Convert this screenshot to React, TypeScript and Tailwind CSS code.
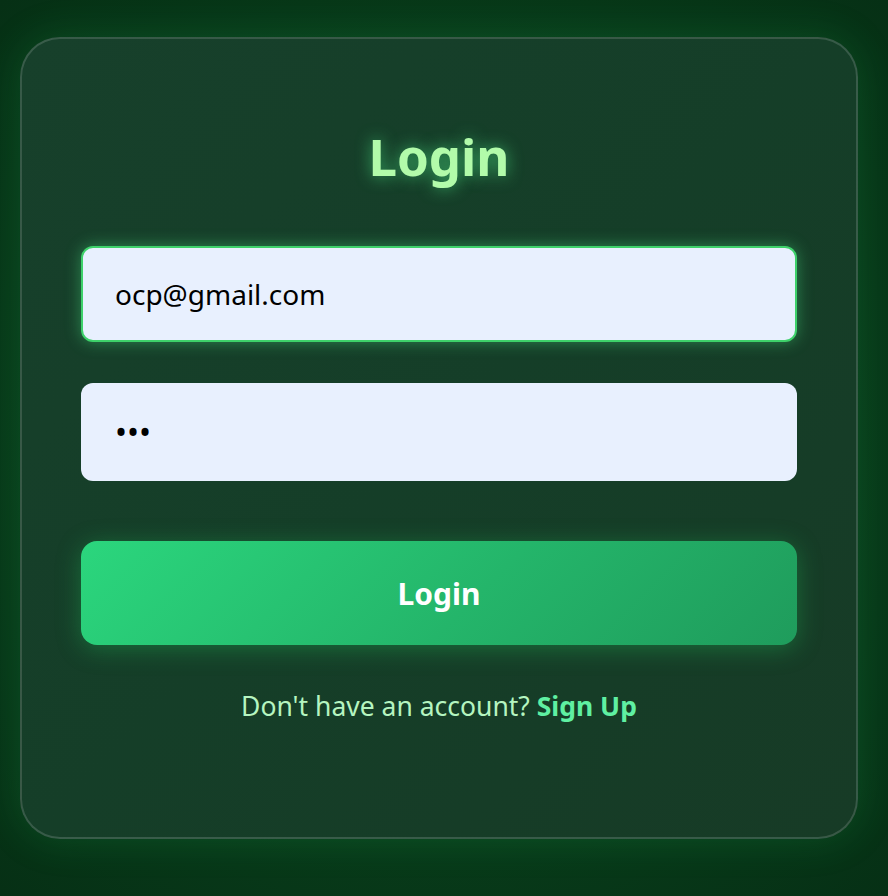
import React from "react";

export default function App() {
  return (
    <div
      className="relative w-[888px] h-[896px] overflow-hidden flex items-start justify-start pt-[37px] pl-[20px]"
      style={{
        fontFamily: '"Noto Sans", "Open Sans", sans-serif',
      }}
    >
      <div className="absolute inset-0 bg-[radial-gradient(ellipse_at_center,#0b4a22_0%,#083c1a_55%,#063015_100%)]" />
      <div className="relative w-[838px] h-[802px] rounded-[40px] border-2 border-white/15 bg-[linear-gradient(135deg,#17402b_0%,#153e28_50%,#173b26_100%)] shadow-[0_0_40px_rgba(34,197,94,0.18)] px-[59px] flex flex-col">
        <h1 className="mt-[87px] text-center text-[51px] leading-[60px] font-bold text-[#b2fbaa] [text-shadow:0_0_16px_rgba(74,222,128,0.7)]">
          Login
        </h1>
        <div className="mt-[60px] h-[96px] rounded-[12px] border-2 border-[#3ed16a] bg-[#e8f0fe] shadow-[0_0_16px_rgba(74,222,128,0.45)] flex items-center pl-[32px] text-[28px] text-black">
          ocp@gmail.com
        </div>
        <div className="mt-[41px] h-[98px] rounded-[12px] bg-[#e8f0fe] flex items-center pl-[34px] text-[32px] text-black">
          •••
        </div>
        <div className="mt-[60px] h-[104px] rounded-[16px] bg-[linear-gradient(135deg,#2bd67d_0%,#24b56a_55%,#1f9c5c_100%)] shadow-[0_4px_24px_rgba(34,197,94,0.35)] flex items-center justify-center text-[30px] font-bold text-white">
          Login
        </div>
        <p className="mt-[44px] text-center text-[26.5px] leading-[34px] text-[#b5f5c0]">
          Don't have an account?{" "}
          <span className="font-bold text-[#5ff0a2]">Sign Up</span>
        </p>
      </div>
    </div>
  );
}
